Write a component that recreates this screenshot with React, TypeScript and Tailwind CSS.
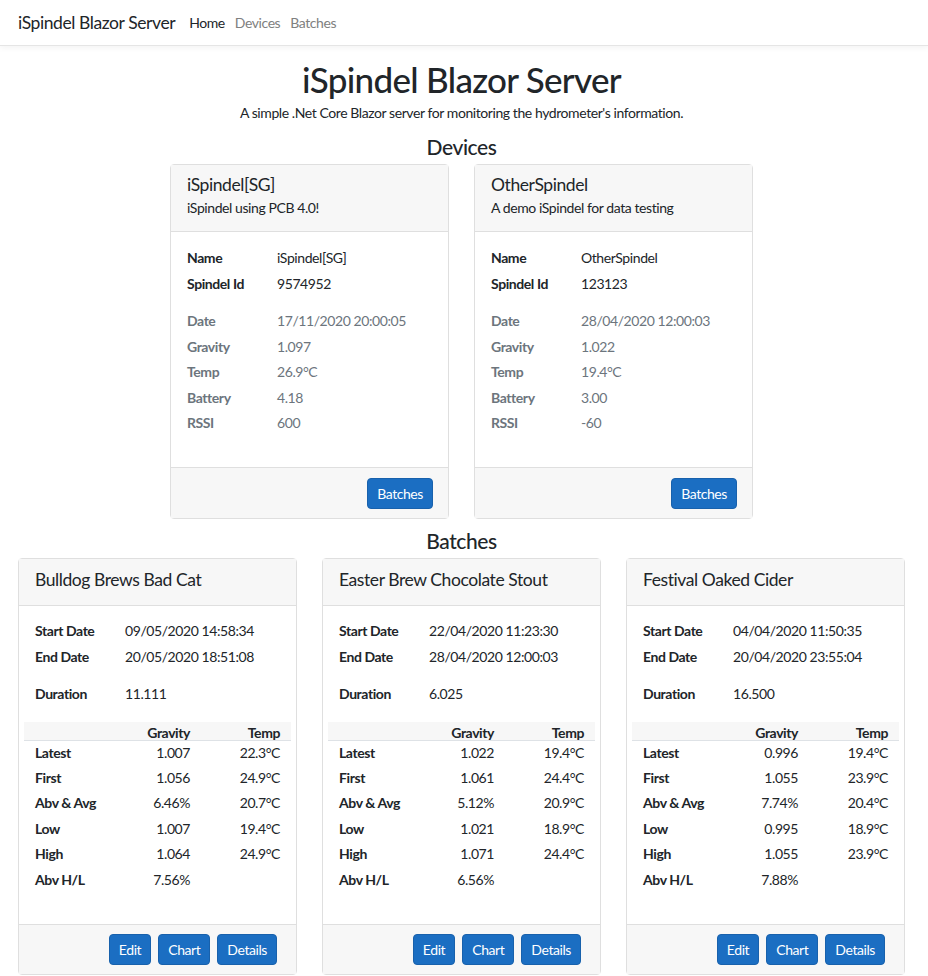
import React from 'react';

const font = { fontFamily: '"Segoe UI", Lato, "Liberation Sans", sans-serif' };

interface Device {
  name: string;
  description: string;
  spindelId: string;
  date: string;
  gravity: string;
  temp: string;
  battery: string;
  rssi: string;
}

interface Batch {
  name: string;
  start: string;
  end: string;
  duration: string;
  rows: [string, string, string][];
}

const devices: Device[] = [
  {
    name: 'iSpindel[SG]',
    description: 'iSpindel using PCB 4.0!',
    spindelId: '9574952',
    date: '17/11/2020 20:00:05',
    gravity: '1.097',
    temp: '26.9°C',
    battery: '4.18',
    rssi: '600',
  },
  {
    name: 'OtherSpindel',
    description: 'A demo iSpindel for data testing',
    spindelId: '123123',
    date: '28/04/2020 12:00:03',
    gravity: '1.022',
    temp: '19.4°C',
    battery: '3.00',
    rssi: '-60',
  },
];

const batches: Batch[] = [
  {
    name: 'Bulldog Brews Bad Cat',
    start: '09/05/2020 14:58:34',
    end: '20/05/2020 18:51:08',
    duration: '11.111',
    rows: [
      ['Latest', '1.007', '22.3°C'],
      ['First', '1.056', '24.9°C'],
      ['Abv & Avg', '6.46%', '20.7°C'],
      ['Low', '1.007', '19.4°C'],
      ['High', '1.064', '24.9°C'],
      ['Abv H/L', '7.56%', ''],
    ],
  },
  {
    name: 'Easter Brew Chocolate Stout',
    start: '22/04/2020 11:23:30',
    end: '28/04/2020 12:00:03',
    duration: '6.025',
    rows: [
      ['Latest', '1.022', '19.4°C'],
      ['First', '1.061', '24.4°C'],
      ['Abv & Avg', '5.12%', '20.9°C'],
      ['Low', '1.021', '18.9°C'],
      ['High', '1.071', '24.4°C'],
      ['Abv H/L', '6.56%', ''],
    ],
  },
  {
    name: 'Festival Oaked Cider',
    start: '04/04/2020 11:50:35',
    end: '20/04/2020 23:55:04',
    duration: '16.500',
    rows: [
      ['Latest', '0.996', '19.4°C'],
      ['First', '1.055', '23.9°C'],
      ['Abv & Avg', '7.74%', '20.4°C'],
      ['Low', '0.995', '18.9°C'],
      ['High', '1.055', '23.9°C'],
      ['Abv H/L', '7.88%', ''],
    ],
  },
];

function Btn({ children }: { children: React.ReactNode }) {
  return (
    <button className="h-[31px] rounded-[4px] border border-[#1861ac] bg-[#1b6ec2] px-[9px] text-[14px] leading-[21px] text-white">
      {children}
    </button>
  );
}

function Row({ label, value, muted }: { label: string; value: string; muted?: boolean }) {
  return (
    <div className={`flex h-[25.5px] items-center ${muted ? 'text-[#6c757d]' : 'text-[#212529]'}`}>
      <div className="w-[90px] font-bold">{label}</div>
      <div>{value}</div>
    </div>
  );
}

function DeviceCard({ device }: { device: Device }) {
  return (
    <div className="flex w-[279px] flex-col rounded-[4px] border border-[#dfdfdf] text-left">
      <div className="h-[67px] border-b border-[#dfdfdf] bg-[#f7f7f7] px-[16px] pt-[9px]">
        <div className="text-[17.5px] leading-[21px] text-[#212529]">{device.name}</div>
        <div className="mt-[2px] text-[14px] leading-[21px] text-[#212529]">{device.description}</div>
      </div>
      <div className="h-[235px] px-[16px] pt-[13px]">
        <Row label="Name" value={device.name} />
        <Row label="Spindel Id" value={device.spindelId} />
        <div className="h-[12px]" />
        <Row label="Date" value={device.date} muted />
        <Row label="Gravity" value={device.gravity} muted />
        <Row label="Temp" value={device.temp} muted />
        <Row label="Battery" value={device.battery} muted />
        <Row label="RSSI" value={device.rssi} muted />
      </div>
      <div className="flex h-[51px] items-center justify-end border-t border-[#dfdfdf] bg-[#f7f7f7] pr-[15px]">
        <Btn>Batches</Btn>
      </div>
    </div>
  );
}

function BatchCard({ batch }: { batch: Batch }) {
  return (
    <div className="flex w-[279px] flex-col rounded-[4px] border border-[#dfdfdf] text-left">
      <div className="h-[47px] border-b border-[#dfdfdf] bg-[#f7f7f7] px-[16px] pt-[10px]">
        <div className="text-[17.5px] leading-[21px] text-[#212529]">{batch.name}</div>
      </div>
      <div className="h-[318px] px-[5px] pt-[12px]">
        <div className="px-[11px]">
          <Row label="Start Date" value={batch.start} />
          <Row label="End Date" value={batch.end} />
          <div className="h-[12px]" />
          <Row label="Duration" value={batch.duration} />
        </div>
        <div className="mt-[15px] text-[#212529]">
          <div className="grid h-[19px] grid-cols-[86px_80px_1fr] items-center border-b border-[#dee2e6] bg-[#f7f7f7] font-bold">
            <div />
            <div className="text-right">Gravity</div>
            <div className="pr-[11px] text-right">Temp</div>
          </div>
          <div className="-mt-[1px]">
            {batch.rows.map((r) => (
              <div key={r[0]} className="grid h-[25.4px] grid-cols-[86px_80px_1fr] items-center">
                <div className="pl-[11px] font-bold whitespace-nowrap">{r[0]}</div>
                <div className="text-right">{r[1]}</div>
                <div className="pr-[11px] text-right">{r[2]}</div>
              </div>
            ))}
          </div>
        </div>
      </div>
      <div className="flex h-[50px] items-center justify-end gap-[7px] border-t border-[#dfdfdf] bg-[#f7f7f7] pr-[19px]">
        <Btn>Edit</Btn>
        <Btn>Chart</Btn>
        <Btn>Details</Btn>
      </div>
    </div>
  );
}

export default function App() {
  return (
    <div className="min-h-screen bg-white text-[14px] leading-[21px] tracking-[-0.03em] text-[#212529]" style={font}>
      <nav className="flex h-[46px] items-center border-b border-[#e5e5e5] px-[18px] shadow-[0_2px_6px_rgba(0,0,0,0.05)]">
        <span className="mr-[14px] text-[17.5px] text-[#212529]">iSpindel Blazor Server</span>
        <div className="flex gap-[10px] text-[14px]">
          <span className="text-[#212529]">Home</span>
          <span className="text-[#808080]">Devices</span>
          <span className="text-[#808080]">Batches</span>
        </div>
      </nav>
      <main className="ml-[18px] w-[887px] text-center">
        <h1 className="mt-[12px] text-[35px] leading-[42px] font-medium tracking-[-0.02em]">iSpindel Blazor Server</h1>
        <p className="mt-[2px] text-[14px] leading-[21px]">A simple .Net Core Blazor server for monitoring the hydrometer's information.</p>
        <h4 className="mt-[11px] text-[21px] leading-[25px] font-medium">Devices</h4>
        <div className="mt-[5px] flex justify-center gap-[25px]">
          {devices.map((d) => (
            <DeviceCard key={d.name} device={d} />
          ))}
        </div>
        <h4 className="mt-[9px] text-[21px] leading-[25px] font-medium">Batches</h4>
        <div className="mt-[5px] flex gap-[25px]">
          {batches.map((b) => (
            <BatchCard key={b.name} batch={b} />
          ))}
        </div>
      </main>
    </div>
  );
}
